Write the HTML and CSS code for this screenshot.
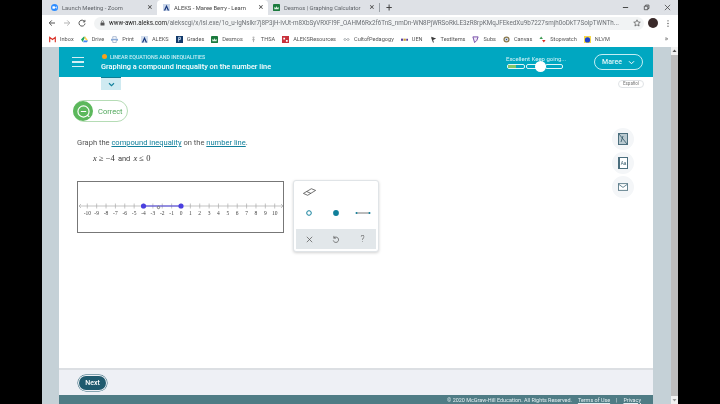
FILE: index.html
```html
<!DOCTYPE html>
<html lang="en">
<head>
<meta charset="UTF-8" />
<title>ALEKS - Maree Berry - Learn</title>
<link rel="stylesheet" href="styles.css">
</head>
<body>
<div class="window">
  <div class="tabstrip">
    <div class="tab tab-one">
      <svg class="tab-icon" viewBox="0 0 8 8"><circle cx="4" cy="4" r="4" fill="#2d8cff"/><rect x="1.6" y="2.6" width="3" height="2.8" rx=".5" fill="#fff"/><path d="M5 3.6 6.5 2.7v2.6L5 4.4z" fill="#fff"/></svg>
      <span class="tab-title">Launch Meeting - Zoom</span>
      <span class="tab-x">×</span>
    </div>
    <div class="tab tab-two active">
      <svg class="tab-icon" viewBox="0 0 8 8"><rect width="8" height="8" fill="#c9d6ea"/><path d="M1 7.5 4 .8l3 6.7H5.4L4 4 2.6 7.5z" fill="#14347a"/></svg>
      <span class="tab-title">ALEKS - Maree Berry - Learn</span>
      <span class="tab-x">×</span>
    </div>
    <div class="tab tab-three">
      <svg class="tab-icon" viewBox="0 0 8 8"><rect width="8" height="8" rx="1" fill="#1b7a3d"/><path d="M1.5 6V3l1.2 1.6L4 2.5l1.3 2.1L6.500 3v3z" fill="#d9f0df"/></svg>
      <span class="tab-title">Desmos | Graphing Calculator</span>
      <span class="tab-x">×</span>
    </div>
    <span class="tab-sep"></span>
    <span class="tab-new">+</span>
    <div class="win-controls">
      <svg viewBox="0 0 8 8"><path d="M1 4h6" stroke="#333" fill="none"/></svg>
      <svg viewBox="0 0 8 8"><path d="M1.500 2.500h4v4h-4zM3 2.500V1.200h3.800v3.900H5.500" stroke="#333" fill="none" stroke-width=".8"/></svg>
      <svg viewBox="0 0 8 8"><path d="M1 1l6 6M7 1 1 7" stroke="#333" fill="none" stroke-width=".8"/></svg>
    </div>
  </div>

  <div class="addressbar">
    <svg class="nav-icon" viewBox="0 0 8 8"><path d="M7 4H1.300M3.800 1.400 1.200 4l2.600 2.600" stroke="#555" fill="none"/></svg>
    <svg class="nav-icon" viewBox="0 0 8 8"><path d="M1 4h5.700M4.200 1.400 6.800 4 4.200 6.600" stroke="#b5b5b5" fill="none"/></svg>
    <svg class="nav-icon" viewBox="0 0 8 8"><path d="M6.600 2.600A3 3 0 1 0 7 4.500M6.900 .9v2H4.900" stroke="#555" fill="none"/></svg>
    <div class="omnibox">
      <svg class="lock" viewBox="0 0 6 7"><rect x=".6" y="3" width="4.800" height="3.600" rx=".5" fill="#555"/><path d="M1.700 3V2a1.300 1.300 0 0 1 2.600 0v1" stroke="#555" fill="none" stroke-width=".7"/></svg>
      <span class="url"><b>www-awn.aleks.com</b>/alekscgi/x/lsl.exe/1o_u-IgNslkr7j8P3jH-IvUt-m8XbSyVRXFI9F_OAHM6Rx2f6TnS_nmDn-WN8PjWRSoRkLE3zR8rpKMqJFEkedXu9b7227smjh0oDkT7SolpTWNTh...</span>
      <svg class="star" viewBox="0 0 10 10"><path d="M5 1l1.200 2.700 2.900.3-2.200 1.900.7 2.900L5 7.300 2.400 8.800l.7-2.900L.9 4l2.900-.3z" stroke="#444" fill="none" stroke-width=".8"/></svg>
    </div>
    <span class="avatar"></span>
    <svg class="menu-dots" viewBox="0 0 4 10"><circle cx="2" cy="2" r=".7" fill="#444"/><circle cx="2" cy="5" r=".7" fill="#444"/><circle cx="2" cy="8" r=".7" fill="#444"/></svg>
  </div>

  <div class="bookmarks">
    <span class="bm"><svg class="bm-ic" viewBox="0 0 8 8"><path d="M.8 7V1.500L4 4l3.200-2.500V7" stroke="#d93025" stroke-width="1.300" fill="none"/></svg>Inbox</span>
    <span class="bm"><svg class="bm-ic" viewBox="0 0 8 8"><path d="M3 .8h2L3 4.500 2 6.800 0 4z" fill="#1fa463"/><path d="M5 .8 8 5H5.800L3.500 1.500z" fill="#ffd04b"/><path d="M2.300 7.200 3.400 5H8L6.800 7.200z" fill="#4285f4"/></svg>Drive</span>
    <span class="bm"><svg class="bm-ic" viewBox="0 0 8 8"><path d="M2 3V.8h4V3" stroke="#7b93b8" fill="none" stroke-width=".7"/><rect y="3" width="8" height="2.500" rx=".5" fill="#8aa9d6"/><path d="M2 5v2.400h4V5" stroke="#7b93b8" fill="#fff" stroke-width=".7"/></svg>Print</span>
    <span class="bm"><svg class="bm-ic" viewBox="0 0 8 8"><rect width="8" height="8" fill="#d3deee"/><path d="M1 7.500 4 .8l3 6.700H5.400L4 4 2.600 7.500z" fill="#14347a"/></svg>ALEKS</span>
    <span class="bm"><svg class="bm-ic" viewBox="0 0 8 8"><rect width="8" height="8" fill="#123a6b"/><path d="M3 6.500v-5h2v2.500H3" stroke="#cfe0f2" fill="none"/></svg>Grades</span>
    <span class="bm"><svg class="bm-ic" viewBox="0 0 8 8"><rect width="8" height="8" rx="1" fill="#1b7a3d"/><path d="M1.500 6V3l1.200 1.600L4 2.500l1.300 2.100L6.500 3v3z" fill="#d9f0df"/></svg>Desmos</span>
    <span class="bm"><svg class="bm-ic" viewBox="0 0 8 8"><circle cx="4" cy="1.800" r="1.200" fill="#bbb"/><path d="M4 3v4M2.500 4.500 4 3.500l1.500 1" stroke="#a5a5a5" fill="none"/></svg>THSA</span>
    <span class="bm"><svg class="bm-ic" viewBox="0 0 8 8"><rect width="8" height="8" fill="#c8323c"/><path d="M1.500 2h2v2h-2zM4.500 4.500h2v2h-2z" fill="#fff"/></svg>ALEKSResources</span>
    <span class="bm"><svg class="bm-ic" viewBox="0 0 8 8"><path d="M4 4C3 2.600 1 2.600 1 4s2 1.400 3 0 3-1.400 3 0-2 1.400-3 0z" stroke="#8a8f94" fill="none" stroke-width=".8"/></svg>CultofPedagogy</span>
    <span class="bm"><svg class="bm-ic" viewBox="0 0 8 8"><path d="M0 3h2.500v2.500H0z" fill="#5b3f9b"/><path d="M3 3h2.500v2.500H3z" fill="#c7a13a"/><path d="M6 3h2v2.500H6z" fill="#5b3f9b"/></svg>UEN</span>
    <span class="bm"><svg class="bm-ic" viewBox="0 0 8 8"><path d="M1.500 .8 7 2.800 3.500 4.500l1 3H3.400L1.500 2.500z" fill="#3a3a3a"/></svg>TestItems</span>
    <span class="bm"><svg class="bm-ic" viewBox="0 0 8 8"><path d="M1 1h6L5.500 5 3 7.500z" stroke="#6a3fa0" fill="#efe6f7" stroke-width="1"/></svg>Subs</span>
    <span class="bm"><svg class="bm-ic" viewBox="0 0 8 8"><circle cx="4" cy="4" r="3.500" fill="#8c7a4f"/><circle cx="4" cy="4" r="2" fill="#d8e2ee"/><circle cx="4" cy="4" r=".8" fill="#34507c"/></svg>Canvas</span>
    <span class="bm"><svg class="bm-ic" viewBox="0 0 8 8"><path d="M2.500 .5 4.500 3.500H.5z" fill="#3f9b54"/><path d="M5.500 7.500 3.500 4.500h4z" fill="#d93025"/></svg>Stopwatch</span>
    <span class="bm"><svg class="bm-ic" viewBox="0 0 8 8"><rect width="8" height="8" fill="#f6d94a"/><circle cx="4" cy="4.500" r="3" fill="#1c3fd0"/></svg>NLVM</span>
    <span class="bm-more">»</span>
  </div>

  <div class="viewport">
    <div class="gutter"></div>
    <div class="app">
      <header class="app-header">
        <div class="burger"><span></span><span></span><span></span></div>
        <div class="topic">
          <div class="topic-sub"><i class="topic-dot"></i>LINEAR EQUATIONS AND INEQUALITIES</div>
          <div class="topic-title">Graphing a compound inequality on the number line</div>
        </div>
        <div class="progress">
          <div class="progress-label">Excellent Keep going...</div>
          <div class="progress-bar">
            <span class="seg seg-one"><i></i></span>
            <span class="seg seg-two"></span>
            <span class="seg seg-three"></span>
            <span class="progress-knob"></span>
          </div>
        </div>
        <div class="user-btn">Maree
          <svg viewBox="0 0 8 6"><path d="M1 1.500 4 4.500l3-3" stroke="#fff" stroke-width="1.200" fill="none"/></svg>
        </div>
      </header>

      <main class="content">
        <div class="top-row">
          <div class="chevron-tab"><svg viewBox="0 0 8 6"><path d="M1 1.500 4 4.500l3-3" stroke="#12809c" stroke-width="1.300" fill="none"/></svg></div>
          <span class="lang">Español</span>
        </div>
        <div class="work-row">
          <div class="work">
            <div class="correct">
              <span class="correct-badge"><svg viewBox="0 0 14 14"><circle cx="7" cy="7" r="5.200" stroke="#fff" fill="none" stroke-width="1.100"/><path d="M4.500 7h5M10.500 10.500l2 1.500" stroke="#fff" stroke-width="1.100" fill="none"/></svg></span>
              <span class="correct-text">Correct</span>
            </div>
            <p class="prompt">Graph the <a>compound inequality</a> on the <a>number line</a>.</p>
            <p class="math"><i>x</i> ≥ −4 <span class="math-word">and</span> <i>x</i> ≤ 0</p>
            <div class="graph-row">
              <div class="numline">
                <svg width="205" height="50" viewBox="78 182 205 50" id="numline-svg"></svg>
              </div>
              <div class="tools">
                <svg class="eraser" viewBox="0 0 16 10"><path d="M1.500 6.500 10 1.500l4.500 1.800-8.500 5.200zM5 4.500l4.500 2" stroke="#444" fill="none" stroke-width=".8"/></svg>
                <div class="tool-row">
                  <svg viewBox="0 0 16 8"><circle cx="8" cy="4" r="2.300" stroke="#12809c" fill="none" stroke-width="1"/></svg>
                  <svg viewBox="0 0 16 8"><circle cx="8" cy="4" r="2.900" fill="#0f7f9a"/></svg>
                  <svg viewBox="0 0 16 8"><path d="M1 4h14" stroke="#555" stroke-width=".8"/><circle cx="1.500" cy="4" r="1" fill="#12809c"/><circle cx="14.500" cy="4" r="1" fill="#12809c"/></svg>
                </div>
                <div class="tool-actions">
                  <svg viewBox="0 0 10 10"><path d="M2 2l6 6M8 2 2 8" stroke="#555" stroke-width=".8" fill="none"/></svg>
                  <svg viewBox="0 0 10 10"><path d="M3 3.500a3 3 0 1 1-.5 2.500M3.200 1v2.500h2.300" stroke="#555" stroke-width=".8" fill="none"/></svg>
                  <span class="help">?</span>
                </div>
              </div>
            </div>
          </div>
          <div class="rail">
            <span class="rail-btn"><svg viewBox="0 0 10 12"><rect x=".5" y=".5" width="9" height="11" fill="#b9c9d0" stroke="#4c6f7e"/><path d="M1 1l8 10M5 3 3 9" stroke="#2f5566" stroke-width=".8"/></svg></span>
            <span class="rail-btn"><svg viewBox="0 0 10 12"><rect x=".5" y=".5" width="9" height="11" fill="#fff" stroke="#4c6f7e"/><rect x=".5" y=".5" width="1.500" height="11" fill="#4c6f7e"/><text x="2.800" y="8" font-size="4.500" font-family="Liberation Sans" fill="#2f5566">Aa</text></svg></span>
            <span class="rail-btn"><svg viewBox="0 0 12 9"><rect x=".5" y=".5" width="11" height="8" fill="#fff" stroke="#4c6f7e"/><path d="M.5 1 6 5l5.500-4" stroke="#4c6f7e" fill="none"/></svg></span>
          </div>
        </div>
      </main>

      <div class="next-bar"><span class="next-btn">Next</span></div>
      <footer class="app-footer">
        <span>© 2020 McGraw-Hill Education. All Rights Reserved.</span>
        <a>Terms of Use</a><span>|</span><a>Privacy</a>
      </footer>
    </div>
    <div class="gutter gutter-right"></div>
    <div class="scrollbar">
      <svg viewBox="0 0 7 8"><path d="M3.500 2.500 5.500 5h-4z" fill="#555"/></svg>
      <div class="thumb"></div>
      <svg viewBox="0 0 7 8"><path d="M3.500 5.500 5.500 3h-4z" fill="#999"/></svg>
    </div>
  </div>
</div>
<script>
// number line ticks and labels
const svg = document.getElementById('numline-svg');
const NS = 'http://www.w3.org/2000/svg';
const xAt = n => 181 + n * 9.37;
const axisY = 206;

function add(tag, attrs, text) {
  const el = document.createElementNS(NS, tag);
  Object.keys(attrs).forEach(k => el.setAttribute(k, attrs[k]));
  if (text) el.textContent = text;
  svg.appendChild(el);
}

add('path', { d: `M79 ${axisY}H283M81 ${axisY - 2}L79 ${axisY}L81 ${axisY + 2}M281 ${axisY - 2}L283 ${axisY}L281 ${axisY + 2}`, stroke: '#aaa', fill: 'none', 'stroke-width': '.7' });
for (let n = -10; n <= 10; n++) {
  add('path', { d: `M${xAt(n)} ${axisY - 2.500}V${axisY + 2.500}`, stroke: '#aaa', 'stroke-width': '.7' });
  add('text', { x: xAt(n), y: axisY + 9, 'text-anchor': 'middle', class: 'tick-label' }, n < 0 ? '-' + (-n) : String(n));
}
add('path', { d: `M${xAt(-4)} ${axisY}H${xAt(0)}`, stroke: '#4a3fe0', 'stroke-width': '1.200' });
add('circle', { cx: xAt(-4), cy: axisY, r: 2.600, fill: '#4a3fe0' });
add('circle', { cx: xAt(0), cy: axisY, r: 2.600, fill: '#4a3fe0' });
add('circle', { cx: 158.500, cy: axisY + 1.500, r: 1.200, fill: '#fff', stroke: '#333', 'stroke-width': '.6' });
</script>
</body>
</html>
```

FILE: styles.css
```css
html, body {
  margin: 0;
  padding: 0;
  height: 100%;
  background: #000;
  overflow: hidden;
  font-family: "Roboto", "Liberation Sans", sans-serif;
}
a, p { margin: 0; }
.window {
  width: 636px;
  height: 404px;
  margin-left: 42px;
  display: flex;
  flex-direction: column;
  background: #fff;
  filter: blur(0.3px);
}

/* browser chrome */
.tabstrip {
  height: 15px;
  display: flex;
  align-items: center;
  background: #dee1e6;
  font-size: 5.800px;
  color: #5f6368;
}
.tab {
  height: 100%;
  box-sizing: border-box;
  display: flex;
  align-items: center;
  padding: 0 4px 0 9px;
}
.tab-one { width: 115px; }
.tab-two { width: 111px; padding-left: 6px; }
.tab-three { width: 111px; padding-left: 5px; }
.tab.active { background: #fff; border-radius: 4px 4px 0 0; color: #444; }
.tab-icon { width: 7px; height: 7px; margin-right: 4px; flex: none; }
.tab-title { flex: 1; white-space: nowrap; overflow: hidden; }
.tab-x { font-size: 9px; color: #444; line-height: 1; width: 6px; text-align: center; }
.tab-sep { width: 1px; height: 9px; background: #9aa0a6; }
.tab-new { font-size: 11px; color: #444; margin-left: 6px; line-height: 1; }
.win-controls {
  margin-left: auto;
  display: flex;
  gap: 14px;
  padding-right: 7px;
}
.win-controls svg { width: 7px; height: 7px; }

.addressbar {
  height: 16px;
  display: flex;
  align-items: center;
  padding: 0 8px 0 6px;
  background: #fff;
}
.nav-icon { width: 8px; height: 8px; margin-right: 7px; flex: none; }
.omnibox {
  flex: 1;
  height: 13px;
  margin-left: 1px;
  background: #f1f3f4;
  border-radius: 7px;
  display: flex;
  align-items: center;
  padding: 0 3px 0 6px;
  font-size: 6.300px;
  color: #6c7075;
  min-width: 0;
}
.lock { width: 5px; height: 6px; margin-right: 4px; flex: none; }
.url { flex: 1; white-space: nowrap; overflow: hidden; }
.url b { font-weight: 400; color: #222; }
.star { width: 8px; height: 8px; margin-left: 8px; flex: none; }
.avatar {
  width: 10px;
  height: 10px;
  border-radius: 50%;
  background: #3a2a2a;
  margin: 0 8px 0 4px;
  flex: none;
}
.menu-dots { width: 4px; height: 9px; flex: none; }

.bookmarks {
  height: 16px;
  display: flex;
  align-items: center;
  padding: 0 0 0 7px;
  gap: 7px;
  background: #fff;
  font-size: 5.600px;
  color: #555;
}
.bm { display: flex; align-items: center; gap: 4px; white-space: nowrap; }
.bm-ic { width: 7px; height: 7px; display: block; flex: none; }
.bm-more { margin-left: auto; padding-right: 10px; font-size: 7px; }

/* page */
.viewport { flex: 1; display: flex; min-height: 0; }
.gutter { width: 17px; background: #c5d1d7; flex: none; }
.gutter-right { width: 18px; }
.scrollbar {
  width: 7px;
  flex: none;
  background: #f1f1f1;
  display: flex;
  flex-direction: column;
}
.scrollbar svg { width: 7px; height: 8px; flex: none; }
.thumb { flex: 1; background: #bdbdbd; }

.app {
  width: 594px;
  flex: none;
  display: flex;
  flex-direction: column;
  background: #fff;
}
.app-header {
  height: 30px;
  flex: none;
  display: flex;
  align-items: center;
  background: #00a7c1;
  color: #fff;
}
.burger {
  width: 12px;
  margin-left: 13px;
  display: flex;
  flex-direction: column;
  gap: 3px;
  flex: none;
}
.burger span { height: 1.500px; background: #d5f0f5; }
.topic { margin-left: 17px; width: 235px; }
.topic-sub {
  display: flex;
  align-items: center;
  gap: 3px;
  padding-left: 1px;
  font-size: 5.300px;
  font-weight: 500;
  color: #c8eef4;
  margin-bottom: 2px;
}
.topic-dot {
  width: 5px;
  height: 5px;
  border-radius: 50%;
  background: #f7a11a;
  display: block;
}
.topic-title { font-size: 7.400px; font-weight: 500; white-space: nowrap; }
.progress { margin-left: 170px; width: 58px; }
.progress-label { font-size: 6px; color: #d6f3f7; white-space: nowrap; margin-bottom: 2px; }
.progress-bar {
  position: relative;
  display: flex;
  gap: 1px;
  height: 5px;
  padding-left: 1px;
}
.seg {
  box-sizing: border-box;
  border: 1px solid #e2f6f9;
  border-radius: 2px;
  height: 5px;
  display: block;
}
.seg-one { width: 18px; }
.seg-one i { display: block; height: 100%; width: 8px; background: #7fc66a; }
.seg-two { width: 18px; }
.seg-three { width: 18px; }
.progress-knob {
  position: absolute;
  left: 29px;
  top: -3px;
  width: 11px;
  height: 11px;
  border-radius: 50%;
  background: #fff;
}
.user-btn {
  margin-left: 30px;
  box-sizing: border-box;
  width: 49px;
  height: 16px;
  border: 1px solid #c4eef4;
  border-radius: 8px;
  display: flex;
  align-items: center;
  justify-content: center;
  gap: 6px;
  font-size: 7px;
  font-weight: 500;
  color: #dff6f9;
}
.user-btn svg { width: 7px; height: 5px; }

.content {
  flex: 1;
  min-height: 0;
  display: flex;
  flex-direction: column;
}
.top-row {
  display: flex;
  justify-content: space-between;
  align-items: flex-start;
  padding: 0 9px 0 42px;
}
.chevron-tab {
  width: 20px;
  height: 13px;
  background: #cfeaf1;
  border-top: 1px solid #0c7f96;
  box-sizing: border-box;
  display: flex;
  align-items: center;
  justify-content: center;
}
.chevron-tab svg { width: 7px; height: 5px; }
.lang {
  margin-top: 3px;
  width: 26px;
  height: 8px;
  box-sizing: border-box;
  border: 1px solid #e0e3e6;
  border-radius: 4px;
  font-size: 4.500px;
  line-height: 6px;
  text-align: center;
  color: #777;
}
.work-row { display: flex; justify-content: space-between; flex: 1; }
.work { padding: 10px 0 0 14px; }
.correct {
  display: flex;
  align-items: center;
  width: 55px;
  height: 22px;
  box-sizing: border-box;
  border: 1px solid #b5dcb5;
  border-radius: 11px;
  margin-bottom: 16px;
}
.correct-badge {
  width: 20px;
  height: 20px;
  border-radius: 50%;
  background: #5cb85c;
  margin-left: -1px;
  display: flex;
  align-items: center;
  justify-content: center;
  flex: none;
}
.correct-badge svg { width: 15px; height: 15px; }
.correct-text { font-size: 7.500px; color: #4fa75a; margin-left: 5px; }
.prompt { margin-left: 4px; font-size: 7.550px; line-height: 10px; color: #555; white-space: nowrap; }
.prompt a { color: #12809c; text-decoration: underline; }
.math {
  margin: 5px 0 0 20px;
  font-family: "Liberation Serif", serif;
  font-size: 8.500px;
  line-height: 10px;
  color: #333;
}
.math-word { font-family: "Roboto", sans-serif; font-size: 7.500px; margin: 0 1px; color: #444; }
.graph-row { display: flex; align-items: flex-start; margin: 16px 0 0 4px; gap: 9px; }
.numline {
  width: 207px;
  height: 52px;
  box-sizing: border-box;
  border: 1px solid #777;
  background: #fff;
  margin-top: 1px;
}
.numline svg { display: block; }
.tick-label { font-family: "Liberation Serif", serif; font-size: 5.500px; fill: #444; }
.tools {
  width: 86px;
  height: 72px;
  box-sizing: border-box;
  border: 1px solid #e0e4e7;
  border-radius: 3px;
  box-shadow: 0 1px 3px rgba(0,0,0,0.18);
  background: #fff;
  padding: 6px 2px 2px 2px;
  display: flex;
  flex-direction: column;
}
.eraser { width: 15px; height: 10px; margin-left: 6px; flex: none; }
.tool-row {
  display: grid;
  grid-template-columns: repeat(3, 1fr);
  justify-items: center;
  align-items: center;
  flex: 1;
}
.tool-row svg { width: 16px; height: 8px; }
.tool-actions {
  height: 20px;
  flex: none;
  display: grid;
  grid-template-columns: repeat(3, 1fr);
  justify-items: center;
  align-items: center;
  background: #e2e7ea;
  color: #555;
}
.tool-actions svg { width: 9px; height: 9px; }
.help { font-size: 9px; font-weight: 300; }
.rail {
  display: flex;
  flex-direction: column;
  gap: 2px;
  padding: 38px 19px 0 0;
}
.rail-btn {
  width: 22px;
  height: 22px;
  border-radius: 50%;
  background: #f4f6f8;
  display: flex;
  align-items: center;
  justify-content: center;
}
.rail-btn svg { width: 10px; height: 12px; }

.next-bar {
  height: 27px;
  flex: none;
  box-sizing: border-box;
  border-top: 2px solid #dcdfe3;
  background: #eef0f5;
  display: flex;
  align-items: center;
  padding-left: 20px;
}
.next-btn {
  width: 27px;
  height: 14px;
  border-radius: 7px;
  background: #1f5a6e;
  box-shadow: 0 0 0 1px #eef0f5, 0 0 0 1.500px #1f5a6e;
  color: #fff;
  font-size: 7px;
  font-weight: 500;
  line-height: 14px;
  text-align: center;
}
.app-footer {
  height: 9px;
  flex: none;
  display: flex;
  justify-content: flex-end;
  align-items: center;
  gap: 6px;
  padding-right: 12px;
  background: #4f7c85;
  color: #e4eef0;
  font-size: 5.450px;
}
.app-footer a { text-decoration: underline; }
```
